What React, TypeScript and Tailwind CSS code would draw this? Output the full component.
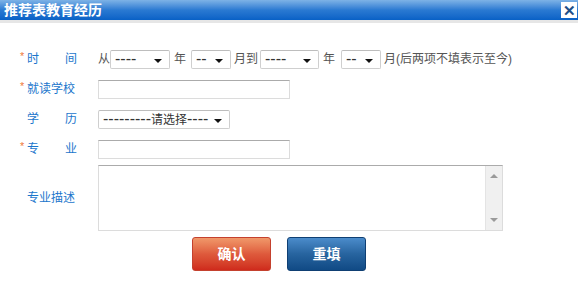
import React from 'react';

const font = { fontFamily: '"Liberation Sans", Arial, "Noto Sans CJK SC", sans-serif' };

function Dashes({ n }: { n: number }) {
  return <span className="text-[16px] leading-none">{'-'.repeat(n)}</span>;
}

function FakeSelect({ width, children }: { width: string; children: React.ReactNode }) {
  return (
    <div
      className={`${width} h-[19px] relative flex items-center border border-[#cfcfcf] border-t-[#bdbdbd] rounded-[2px] bg-white pl-[4px] text-[12px] text-[#333] leading-none`}
    >
      <span className="whitespace-nowrap">{children}</span>
      <span className="absolute right-[7px] top-[8px] w-0 h-0 border-l-[4px] border-r-[4px] border-t-[4px] border-l-transparent border-r-transparent border-t-[#111]" />
    </div>
  );
}

function Label({ star, left, right, text }: { star?: boolean; left?: string; right?: string; text?: string }) {
  return (
    <div className="w-[98px] shrink-0 flex items-center pl-[20px] text-[12px] text-[#1b76cc]">
      <span className="w-[7px] text-[#f07a3a] text-[11px] leading-none self-start mt-[1px]">{star ? '*' : ''}</span>
      {text ? (
        <span>{text}</span>
      ) : (
        <span className="w-[50px] flex justify-between">
          <span>{left}</span>
          <span>{right}</span>
        </span>
      )}
    </div>
  );
}

export default function App() {
  return (
    <div className="w-[578px] h-[295px] bg-white overflow-hidden" style={font}>
      {/* title bar */}
      <div className="h-[20px] flex items-center justify-between pl-[4px] pr-[1px] bg-gradient-to-b from-[#7db2e6] via-[#2a7ad2] to-[#0861c6]">
        <span className="text-white text-[14px] font-bold leading-none">推荐表教育经历</span>
        <span className="w-[16px] h-[16px] bg-white flex items-center justify-center text-[#1d4f88] text-[15px] font-bold leading-none">✕</span>
      </div>
      <div className="h-[3px] bg-[#e6e6e6]" />

      <div className="pt-[21px]">
        {/* time */}
        <div className="h-[30px] flex items-center">
          <Label star left="时" right="间" />
          <div className="flex items-center text-[12px] text-[#555]">
            <span className="w-[12px]">从</span>
            <FakeSelect width="w-[60px]"><Dashes n={4} /></FakeSelect>
            <span className="ml-[4px] w-[17px]">年</span>
            <FakeSelect width="w-[40px]"><Dashes n={2} /></FakeSelect>
            <span className="ml-[3px] w-[26px]">月到</span>
            <FakeSelect width="w-[59px]"><Dashes n={4} /></FakeSelect>
            <span className="ml-[4px] w-[18px]">年</span>
            <FakeSelect width="w-[40px]"><Dashes n={2} /></FakeSelect>
            <span className="ml-[3px] whitespace-nowrap">月(后两项不填表示至今)</span>
          </div>
        </div>

        {/* school */}
        <div className="h-[30px] flex items-center">
          <Label star text="就读学校" />
          <div className="w-[192px] h-[19px] border border-[#dcdcdc] border-t-[#ababab] bg-white" />
        </div>

        {/* degree */}
        <div className="h-[30px] flex items-center">
          <Label left="学" right="历" />
          <FakeSelect width="w-[132px]">
            <Dashes n={9} />请选择<Dashes n={4} />
          </FakeSelect>
        </div>

        {/* major */}
        <div className="h-[30px] flex items-center">
          <Label star left="专" right="业" />
          <div className="w-[192px] h-[19px] border border-[#dcdcdc] border-t-[#ababab] bg-white" />
        </div>

        {/* description */}
        <div className="mt-[1px] h-[66px] flex items-center">
          <Label text="专业描述" />
          <div className="w-[405px] h-[66px] flex border border-[#dcdcdc] border-t-[#ababab] bg-white">
            <div className="flex-1" />
            <div className="w-[17px] bg-[#f0f0f0] border-l border-[#e4e4e4] flex flex-col items-center justify-between py-[8px]">
              <span className="w-0 h-0 border-l-[4px] border-r-[4px] border-b-[4px] border-l-transparent border-r-transparent border-b-[#9a9a9a]" />
              <span className="w-0 h-0 border-l-[4px] border-r-[4px] border-t-[4px] border-l-transparent border-r-transparent border-t-[#9a9a9a]" />
            </div>
          </div>
        </div>

        {/* buttons */}
        <div className="mt-[6px] flex pl-[192px] gap-[16px]">
          <button className="w-[79px] h-[34px] rounded-[3px] border border-[#c4412e] bg-gradient-to-b from-[#f0986a] via-[#de5a3c] to-[#cf2a1c] text-white text-[14px] font-bold">
            确认
          </button>
          <button className="w-[79px] h-[34px] rounded-[3px] border border-[#0f3f73] bg-gradient-to-b from-[#4b8ccb] via-[#27649f] to-[#104a85] text-white text-[14px] font-bold">
            重填
          </button>
        </div>
      </div>
    </div>
  );
}
